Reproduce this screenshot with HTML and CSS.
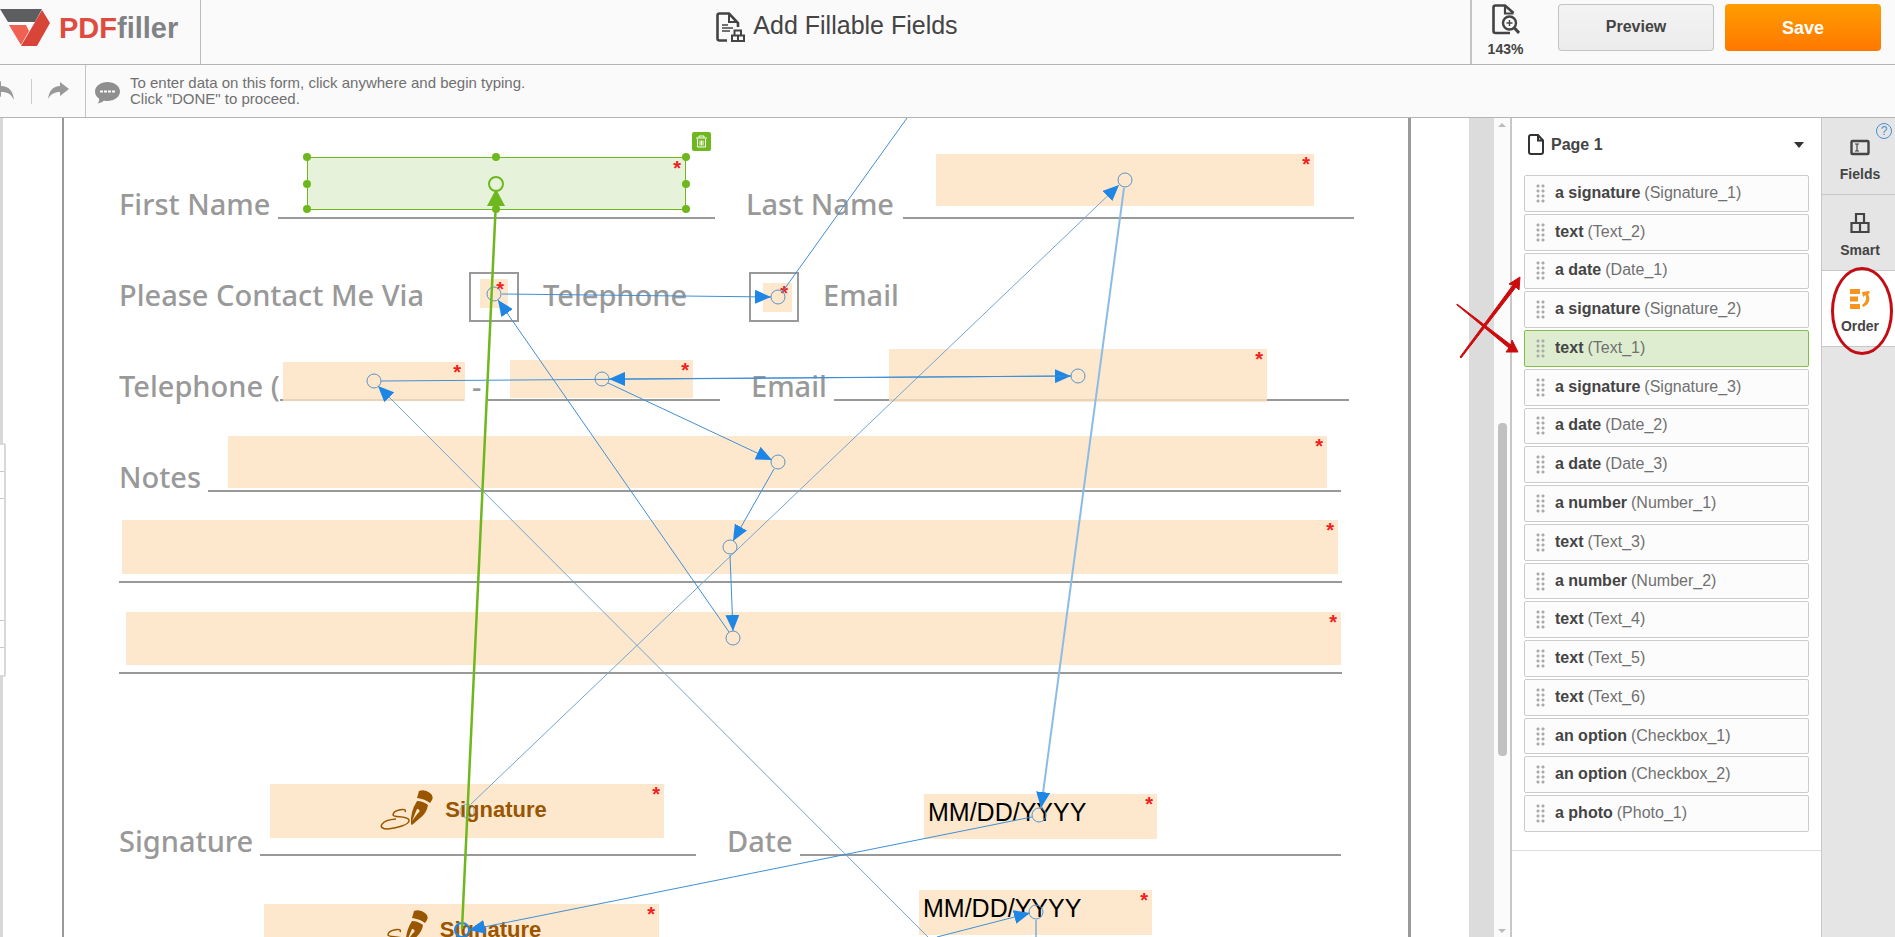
FILE: index.html
```html
<!DOCTYPE html>
<html lang="en">
<head>
<meta charset="utf-8">
<title>Add Fillable Fields</title>
<link rel="stylesheet" href="styles.css">
</head>
<body>
<svg class="defs" aria-hidden="true">
  <symbol id="pen" viewBox="0 0 54 40">
    <path d="M40 1Q46 -1 51 3Q55 6 53 10L51 13Q46 9 38 8Z"/>
    <path fill-rule="evenodd" d="M38 11Q44 11 49 15Q48 23 40 29L33 35L32 34Q31 22 38 11ZM38 19L33 31L39 23A2 2 0 0 0 38 19Z"/>
    <path d="M26 22C29 17 14 20 14 25C15 28 28 25 30 30C31 35 17 38 9 39C-3 39 2 30 17 29" fill="none" stroke="#9a5500" stroke-width="1.500"/>
  </symbol>
</svg>

<header class="header">
  <a class="logo" href="#" aria-label="PDFfiller">
    <svg width="50" height="38" viewBox="0 0 50 38" aria-hidden="true">
      <path d="M0 0H42L35 13H8Z" fill="#5c5e60"/>
      <path d="M9 16H26L29 22L21 36Z" fill="#ee6153"/>
      <path d="M42 1L50 14L37 37H21Z" fill="#d84437"/>
    </svg>
    <span class="logo-text"><span class="logo-pdf">PDF</span>filler</span>
  </a>
  <h1 class="title">
    <svg width="29" height="31" viewBox="0 0 29 31" fill="none" stroke="#444" aria-hidden="true">
      <path d="M11 28.500H3.500Q1.500 28.500 1.500 26.500V3.500Q1.500 1.500 3.500 1.500H13L22 11V15" stroke-width="2.600"/>
      <path d="M13 2V10H21" stroke-width="2"/>
      <path d="M6 13H12M6 16H17M6 19H14" stroke-width="1.400"/>
      <path d="M18.500 18.500H25V23.500H18.500ZM16 23.500H22V29H16ZM22 23.500H28V29H22Z" stroke-width="2"/>
    </svg>
    Add Fillable Fields
  </h1>
  <div class="actions">
    <button class="zoom" type="button">
      <svg width="28" height="31" viewBox="0 0 28 31" fill="none" stroke="#444" aria-hidden="true">
        <path d="M18 29H3.500Q1.500 29 1.500 27V3.500Q1.500 1.500 3.500 1.500H13L21.500 9" stroke-width="2.600"/>
        <path d="M13 2V9.500H21.500" stroke-width="2.200"/>
        <circle cx="17.500" cy="19" r="6.500" stroke-width="2.400"/>
        <path d="M22.500 24L27 29" stroke-width="3"/>
        <path d="M14.500 19H20.500M17.500 16V22" stroke-width="1.400"/>
      </svg>
      143%
    </button>
    <button class="btn preview" type="button">Preview</button>
    <button class="btn save" type="button">Save</button>
  </div>
</header>

<div class="toolbar">
  <div class="history">
    <button type="button" aria-label="Undo"><svg width="24" height="20" viewBox="0 0 24 20"><path d="M0 8L10 0V5C18 5 22 10 23 19C20 13 17 11 10 11V16Z"/></svg></button>
    <span class="divider"></span>
    <button type="button" aria-label="Redo"><svg width="21" height="18" viewBox="0 0 21 18"><path d="M21 7L12 0V4C5 4 1 9 0 17C3 12 6 10 12 10V14Z"/></svg></button>
  </div>
  <svg class="bubble" width="25" height="22" viewBox="0 0 25 22" aria-hidden="true">
    <path d="M12.500 0C19 0 25 4 25 9.500S19 19 12.500 19C11 19 10 19 9 18.500C7 20.500 5 21 2.500 21.500C4 20 4.500 18.500 4 16.500C1.500 15 0 12.500 0 9.500C0 4 6 0 12.500 0Z" fill="#8f8f8f"/>
    <path d="M5 9.500H20" stroke="#fafafa" stroke-width="2" stroke-dasharray="3 1"/>
  </svg>
  <p class="hint">To enter data on this form, click anywhere and begin typing.<br>Click "DONE" to proceed.</p>
</div>

<div class="workspace">
  <main class="canvas">
    <div class="toolbox" aria-hidden="true"><i></i><i></i><i></i><i></i><i></i></div>
    <form class="sheet">
      <div class="row name-row"><label for="first">First Name</label><hr><label for="last">Last Name</label><hr></div>
      <div class="row via-row"><span>Please Contact Me Via</span><span class="box"></span><label for="via-tel">Telephone</label><span class="box"></span><label for="via-mail">Email</label></div>
      <div class="row tel-row"><label for="tel1">Telephone (</label><hr><span class="dash">-</span><hr><label for="mail">Email</label><hr></div>
      <div class="row notes-row"><label for="notes1">Notes</label><hr></div>
      <div class="row line-row"><hr></div>
      <div class="row line-row"><hr></div>
      <div class="row"></div>
      <div class="row sign-row"><span>Signature</span><hr><label for="date1">Date</label><hr></div>
    </form>

    <div class="field selected f-first"><input id="first" type="text"><b>*</b></div>
    <div class="field f-last"><input id="last" type="text"><b>*</b></div>
    <div class="field small f-cb1"><input id="via-tel" type="checkbox"><b>*</b></div>
    <div class="field small f-cb2"><input id="via-mail" type="checkbox"><b>*</b></div>
    <div class="field f-tel1"><input id="tel1" type="text"><b>*</b></div>
    <div class="field f-tel2"><input type="text" aria-label="Telephone number"><b>*</b></div>
    <div class="field f-mail"><input id="mail" type="text"><b>*</b></div>
    <div class="field f-notes1"><input id="notes1" type="text"><b>*</b></div>
    <div class="field f-notes2"><input type="text" aria-label="Notes line 2"><b>*</b></div>
    <div class="field f-notes3"><input type="text" aria-label="Notes line 3"><b>*</b></div>
    <div class="field f-sig1"><button class="sign" type="button"><svg width="54" height="40"><use href="#pen"/></svg>Signature</button><b>*</b></div>
    <div class="field f-sig2"><button class="sign" type="button"><svg width="54" height="40"><use href="#pen"/></svg>Signature</button><b>*</b></div>
    <div class="field f-date1"><input id="date1" type="text" value="MM/DD/YYYY"><b>*</b></div>
    <div class="field f-date2"><input type="text" aria-label="Second date" value="MM/DD/YYYY"><b>*</b></div>

    <svg class="links" width="1560" height="819" viewBox="0 118 1560 819" aria-hidden="true">
      <defs>
        <marker id="tip" markerUnits="userSpaceOnUse" markerWidth="16" markerHeight="14" refX="16" refY="7" orient="auto"><path d="M0 0L16 7L0 14Z" fill="#1e86e5"/></marker>
      </defs>
      <g class="link">
        <path class="pale" d="M471 804L1119 185" marker-end="url(#tip)"/>
        <path class="pale" d="M928 937L378 386" marker-end="url(#tip)"/>
        <path class="mid" d="M1124 188L1041 808" marker-end="url(#tip)"/>
        <path d="M1032 817L469 930" marker-end="url(#tip)"/>
        <path d="M381 381L1071 376" marker-end="url(#tip)"/>
        <path d="M1071 376L609 379" marker-end="url(#tip)"/>
        <path d="M608 383L772 460" marker-end="url(#tip)"/>
        <path d="M774 469L733 541" marker-end="url(#tip)"/>
        <path d="M730 555L733 631" marker-end="url(#tip)"/>
        <path d="M729 632L498 300" marker-end="url(#tip)"/>
        <path d="M502 294L771 297" marker-end="url(#tip)"/>
        <path d="M783 291L907 118"/>
        <path d="M937 937L1030 913" marker-end="url(#tip)"/>
        <path d="M1036 920V937"/>
        <circle cx="1125" cy="180" r="7"/><circle cx="494" cy="294" r="7"/><circle cx="778" cy="297" r="7"/>
        <circle cx="374" cy="381" r="7"/><circle cx="602" cy="379" r="7"/><circle cx="1078" cy="376" r="7"/>
        <circle cx="778" cy="462" r="7"/><circle cx="730" cy="547" r="7"/><circle cx="733" cy="638" r="7"/>
        <circle cx="467" cy="811" r="7" opacity=".6"/><circle class="last" cx="462" cy="930" r="7"/>
        <circle cx="1039" cy="815" r="7"/><circle cx="1036" cy="912" r="7"/>
      </g>
      <path d="M462 929L496 200" stroke="#6fb71e" stroke-width="2.500"/>
      <path d="M496 189L505 206H487Z" fill="#6fb71e"/>
      <circle cx="496" cy="184" r="7" fill="none" stroke="#6fb71e" stroke-width="2"/>
      <g fill="#6fb71e">
        <circle cx="307" cy="157" r="4"/><circle cx="496" cy="157" r="4"/><circle cx="686" cy="157" r="4"/>
        <circle cx="307" cy="184" r="4"/><circle cx="686" cy="184" r="4"/>
        <circle cx="307" cy="209" r="4"/><circle cx="496" cy="209" r="4"/><circle cx="686" cy="209" r="4"/>
      </g>
      <g class="marks">
        <path d="M1460 357L1513 285L1509 284L1520 277L1519 290L1516 287L1461 358Z"/>
        <path d="M1457 304L1511 345L1512 340L1518 352L1506 352L1509 348L1457 305Z"/>
      </g>
    </svg>
    <button class="trash" type="button" aria-label="Delete field">
      <svg width="13" height="13" viewBox="0 0 13 13" fill="none" stroke="#fff"><path d="M1 3H12M4 2.500V1H9V2.500M2.500 4V12H10.500V4M5 5.500V10.500M6.500 5.500V10.500M8 5.500V10.500"/></svg>
    </button>
  </main>
  <div class="scroll" aria-hidden="true"><span class="up"></span><span class="thumb"></span><span class="down"></span></div>

  <aside class="panel">
    <div class="page-pick">
      <svg width="16" height="21" viewBox="0 0 16 21" fill="none" stroke="#333" stroke-width="2" aria-hidden="true"><path d="M10 1H3Q1 1 1 3V18Q1 20 3 20H13Q15 20 15 18V6.500ZM10 1V6.500H15"/></svg>
      <select aria-label="Page"><option>Page 1</option></select>
      <span class="caret"></span>
    </div>
    <ol class="order">
      <li><i></i><b>a signature</b> (Signature_1)</li>
      <li><i></i><b>text</b> (Text_2)</li>
      <li><i></i><b>a date</b> (Date_1)</li>
      <li><i></i><b>a signature</b> (Signature_2)</li>
      <li class="current"><i></i><b>text</b> (Text_1)</li>
      <li><i></i><b>a signature</b> (Signature_3)</li>
      <li><i></i><b>a date</b> (Date_2)</li>
      <li><i></i><b>a date</b> (Date_3)</li>
      <li><i></i><b>a number</b> (Number_1)</li>
      <li><i></i><b>text</b> (Text_3)</li>
      <li><i></i><b>a number</b> (Number_2)</li>
      <li><i></i><b>text</b> (Text_4)</li>
      <li><i></i><b>text</b> (Text_5)</li>
      <li><i></i><b>text</b> (Text_6)</li>
      <li><i></i><b>an option</b> (Checkbox_1)</li>
      <li><i></i><b>an option</b> (Checkbox_2)</li>
      <li><i></i><b>a photo</b> (Photo_1)</li>
    </ol>
  </aside>

  <nav class="tabs">
    <button type="button">
      <svg width="20" height="22" viewBox="0 0 20 22" fill="none" stroke="#444" aria-hidden="true"><rect x="1.500" y="6" width="17" height="13" rx="1" stroke-width="2.400"/><path d="M5 9H9M7 9V16M5 16H9" stroke-width="1.200"/></svg>
      Fields
    </button>
    <button type="button">
      <svg width="20" height="22" viewBox="0 0 20 22" fill="none" stroke="#444" stroke-width="2.200" aria-hidden="true"><path d="M6 3H14V12H6ZM1.500 12H10V21H1.500ZM10 12H18.500V21H10Z"/></svg>
      Smart
    </button>
    <button type="button" class="active">
      <svg width="20" height="22" viewBox="0 0 20 22" aria-hidden="true"><path d="M0 2H10V7H0ZM0 9.500H8V14.500H0ZM0 17H10V22H0Z" fill="#f7941d"/><path d="M12 5L19 4L20 6L18 7C21 12 19 18 13 20L12 18C16 15 17 12 15.500 8L13 10Z" fill="#f7941d"/></svg>
      Order
    </button>
    <a class="help" href="#" aria-label="Help">?</a>
    <span class="ring"></span>
  </nav>
</div>
</body>
</html>
```
FILE: styles.css
```css
* { box-sizing: border-box; }
body {
  margin: 0;
  min-height: 100vh;
  display: flex;
  flex-direction: column;
  overflow: hidden;
  font: 16px/20px "Liberation Sans", Arial, sans-serif;
  color: #444;
  background: #fff;
}
button, input, select { font: inherit; color: inherit; margin: 0; padding: 0; border: 0; background: none; }
svg { display: block; flex: none; }
.defs { position: absolute; width: 0; height: 0; }

.header { height: 65px; flex: none; display: flex; background: #fafafa; border-bottom: 1px solid #b4b4b4; }
.logo { width: 201px; display: flex; align-items: flex-start; gap: 9px; padding-top: 9px; border-right: 1px solid #bbb; text-decoration: none; }
.logo-text { font-size: 29px; line-height: 38px; font-weight: bold; color: #808285; }
.logo-pdf { color: #df4b3f; }
.title { flex: 1; display: flex; justify-content: center; gap: 8px; margin: 0; padding: 12px 0 0 3px; font-size: 25px; line-height: 26px; font-weight: normal; }
.actions { width: 425px; display: flex; align-items: flex-start; gap: 11px; padding: 4px 14px 0 0; border-left: 2px solid #c4c4c4; }
.zoom { width: 67px; display: flex; flex-direction: column; align-items: center; margin-right: 8px; gap: 5px; font-size: 14px; line-height: 18px; font-weight: bold; }
.btn { flex: 1; height: 47px; border-radius: 4px; font-weight: bold; }
.preview { padding-bottom: 2px; box-shadow: inset 0 0 0 1px #c4c4c4; background: linear-gradient(#f3f3f3, #ececec); }
.save { font-size: 18px; color: #fff; background: linear-gradient(#ff9d00, #ff7800); }

.toolbar { height: 53px; flex: none; display: flex; background: #fafafa; border-bottom: 1px solid #b4b4b4; }
.history { width: 86px; display: flex; align-items: center; border-right: 1px solid #c4c4c4; fill: #999; }
.history button:first-child { margin-left: -9px; }
.divider { width: 1px; height: 25px; margin: 0 16px; background: #ccc; }
.bubble { margin: 17px 10px 0 9px; }
.hint { margin: 0; padding-top: 10px; font-size: 15px; line-height: 16px; color: #707070; }

.workspace { flex: 1; display: flex; min-height: 0; }
.canvas { position: relative; flex: 1; min-width: 0; border-left: 3px solid #d8d8d8; border-right: 25px solid #dcdcdc; }
.toolbox { position: absolute; left: -3px; top: 325px; width: 6px; border: 2px solid #d8d8d8; border-left: 0; border-radius: 0 3px 3px 0; background: #fff; }
.toolbox i { display: block; height: 27px; border-bottom: 1px solid #c8c8c8; }
.toolbox i:nth-child(3) { height: 122px; }
.toolbox i:last-child { border: 0; }

.sheet { height: 100%; margin: 0 58px 0 59px; padding: 10px 55px 0; border: solid #9a9a9a; border-width: 0 3px 0 2px; font: 500 29px/30px "Noto Sans", "Open Sans", sans-serif; color: #999; }
.row { height: 91px; display: grid; align-items: end; white-space: nowrap; }
.row hr { width: 100%; height: 2px; margin: 0; border: 0; background: #999; }
.row hr + label { padding-left: 31px; }
.name-row { grid-template-columns: 159px 437px 188px 451px; }
.via-row { grid-template-columns: 350px 74px 206px 74px 1fr; }
.box { width: 50px; height: 50px; margin-bottom: -12px; border: 2px solid #999; }
.tel-row { grid-template-columns: 161px 184px 24px 232px 114px 515px; }
.tel-row .dash { padding-left: 8px; }
.notes-row { grid-template-columns: 89px 1133px; }
.line-row { grid-template-columns: 1223px; }
.sign-row { grid-template-columns: 141px 436px 104px 541px; }

.field { position: absolute; background: rgba(254, 226, 192, .8); }
.field input { display: block; width: 100%; height: 100%; appearance: none; padding: 0 4px 8px; font-size: 25px; color: #000; }
.field > b { position: absolute; right: 4px; top: 0; font-size: 20px; line-height: 20px; color: #f02020; }
.selected { background: #e6f2da; border: 1px solid #6fb71e; }
.f-first { left: 304px; top: 39px; width: 379px; height: 53px; }
.f-last { left: 933px; top: 36px; width: 378px; height: 52px; }
.f-cb1 { left: 477px; top: 161px; width: 28px; height: 29px; }
.f-cb2 { left: 760px; top: 165px; width: 29px; height: 29px; }
.f-tel1 { left: 280px; top: 244px; width: 182px; height: 39px; }
.f-tel2 { left: 507px; top: 242px; width: 183px; height: 38px; }
.f-mail { left: 886px; top: 231px; width: 378px; height: 53px; }
.f-notes1 { left: 225px; top: 318px; width: 1099px; height: 52px; }
.f-notes2 { left: 119px; top: 402px; width: 1216px; height: 54px; }
.f-notes3 { left: 123px; top: 494px; width: 1215px; height: 53px; }
.f-sig1 { left: 267px; top: 666px; width: 394px; height: 54px; }
.f-sig2 { left: 261px; top: 786px; width: 395px; height: 54px; }
.f-date1 { left: 921px; top: 676px; width: 233px; height: 45px; }
.f-date2 { left: 916px; top: 772px; width: 233px; height: 45px; }
.sign { width: 100%; height: 100%; display: flex; align-items: center; justify-content: center; gap: 12px; padding: 0 8px 2px 0; font-size: 22px; font-weight: bold; color: #9a5500; fill: #9a5500; }
.links { position: absolute; left: -3px; top: 0; z-index: 2; pointer-events: none; }
.link { fill: none; stroke: #3f8fd6; stroke-width: 1; }
.link circle { stroke: #5a94c4; }
.link .last { stroke: #1e86e5; stroke-width: 2; }
.link .pale { stroke: #6fa6d2; }
.link .mid { stroke: #8bbce6; stroke-width: 2; }
.marks { fill: #cc0c0c; stroke: #cc0c0c; stroke-width: 1; }
.trash { position: absolute; left: 689px; top: 14px; width: 19px; height: 19px; display: grid; place-items: center; border-radius: 2px; background: #6fb71e; }

.scroll { width: 16px; display: flex; flex-direction: column; align-items: center; background: #fbfbfb; }
.up, .down { border: 4px solid transparent; }
.up { margin-top: 1px; border-bottom-color: #bbb; }
.down { margin-top: auto; border-top-color: #bbb; }
.thumb { width: 9px; height: 333px; margin-top: 296px; border-radius: 4px; background: #c1c1c1; }

.panel { width: 312px; border: solid #c8c8c8; border-width: 0 1px 0 2px; }
.page-pick { display: flex; align-items: center; gap: 7px; height: 57px; padding: 0 17px 4px 16px; }
.page-pick select { flex: 1; appearance: none; font-weight: bold; }
.caret { border: solid transparent; border-width: 6px 5px 0; border-top-color: #333; }
.order { min-height: 676px; display: grid; grid-auto-rows: 1fr; gap: 2px; margin: 0; padding: 0 12px 18px; list-style: none; border-bottom: 1px solid #ddd; }
.order li { display: flex; align-items: center; gap: 4px; padding: 0 11px 1px; border: 1px solid #ccc; border-radius: 2px; background: #fcfcfc; color: #707070; }
.order b { color: #444; }
.order i { width: 9px; height: 20px; margin: 2px 6px 0 0; background: radial-gradient(circle at 2px 2px, #aaa 1px, transparent 2px) 0 0 / 5px 5px; }
.order .current { background: #deedcf; border-color: #84bd4c; }

.tabs { position: relative; width: 73px; padding-top: 1px; background: #e5e5e5; }
.tabs button { width: 100%; height: 76px; display: flex; flex-direction: column; align-items: center; justify-content: center; gap: 8px; padding: 7px 0 3px 3px; border-bottom: 1px solid #c8c8c8; font-size: 14px; line-height: 18px; font-weight: bold; }
.tabs .active { background: #fff; }
.help { position: absolute; right: 3px; top: 5px; width: 16px; height: 16px; border: 1px solid #4a90d0; border-radius: 8px; font-size: 12px; line-height: 14px; text-align: center; text-decoration: none; color: #4a90d0; }
.ring { position: absolute; right: 2px; top: 149px; width: 62px; height: 88px; border: 3px solid #c40c14; border-radius: 50%; }
```
